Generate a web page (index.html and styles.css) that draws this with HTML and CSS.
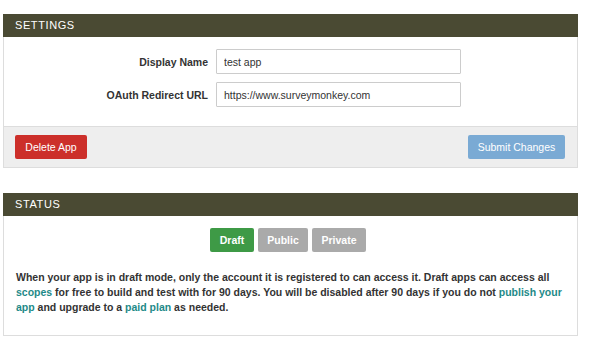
FILE: index.html
```html
<!DOCTYPE html>
<html>
<head>
<meta charset="utf-8">
<link rel="stylesheet" href="styles.css">
</head>
<body>
<div class="page">
  <section class="panel settings">
    <div class="panel-head">SETTINGS</div>
    <div class="panel-body form">
      <label class="label" for="dn">Display Name</label>
      <input class="field" id="dn" type="text" value="test app">
      <label class="label" for="ru">OAuth Redirect URL</label>
      <input class="field" id="ru" type="text" value="https://www.surveymonkey.com">
    </div>
    <div class="panel-foot">
      <button class="btn btn-danger">Delete App</button>
      <button class="btn btn-primary">Submit Changes</button>
    </div>
  </section>

  <section class="panel status">
    <div class="panel-head">STATUS</div>
    <div class="panel-body status-body">
      <div class="toggle">
        <button class="btn btn-green">Draft</button>
        <button class="btn btn-grey">Public</button>
        <button class="btn btn-grey">Private</button>
      </div>
      <p class="note">When your app is in draft mode, only the account it is registered to can access it. Draft apps can access all <a href="#">scopes</a> for free to build and test with for 90 days. You will be disabled after 90 days if you do not <a href="#">publish your</a> <a href="#">app</a> and upgrade to a <a href="#">paid plan</a> as needed.</p>
    </div>
  </section>
</div>
</body>
</html>
```

FILE: styles.css
```css
* { box-sizing: border-box; }
html, body { margin: 0; padding: 0; background: #fff; }
body {
  font-family: "Liberation Sans", Arial, Helvetica, sans-serif;
  color: #333;
  font-size: 10.5px;
}
.page {
  width: 575px;
  margin-left: 3px;
  padding-top: 14px;
}
.panel { display: flex; flex-direction: column; }
.settings { margin-bottom: 25px; }
.panel-head {
  height: 23px;
  background: #4a4a33;
  color: #fff;
  font-size: 11px;
  letter-spacing: 0.6px;
  line-height: 23px;
  padding-left: 12px;
}
.panel-body {
  border: 1px solid #ddd;
  border-top: none;
  background: #fff;
}
.form {
  display: grid;
  grid-template-columns: 204px 245px;
  column-gap: 8px;
  row-gap: 8px;
  align-items: center;
  padding: 12px 0 19px 0;
}
.label {
  text-align: right;
  font-weight: bold;
  font-size: 10.5px;
  color: #333;
}
.field {
  height: 25px;
  width: 245px;
  border: 1px solid #ccc;
  border-radius: 1px;
  padding: 0 7px;
  font-family: inherit;
  font-size: 10.5px;
  color: #333;
  outline: none;
}
.panel-foot {
  display: flex;
  justify-content: space-between;
  align-items: center;
  background: #eee;
  border: 1px solid #ddd;
  border-top: none;
  padding: 7px 12px 8px 11px;
  height: 41px;
}
.btn {
  height: 24px;
  border: none;
  border-radius: 2px;
  font-family: inherit;
  font-size: 10.5px;
  color: #fff;
  padding: 0 10px;
  cursor: pointer;
}
.btn-danger { background: #cc2f2a; width: 72px; }
.btn-primary { background: #7aaad4; width: 97px; padding: 0; }
.status-body {
  display: flex;
  flex-direction: column;
  padding: 12px 12px 20px 12px;
}
.toggle {
  display: flex;
  justify-content: center;
  gap: 4px;
  padding-right: 5px;
}
.btn-green { background: #3e9a46; font-weight: bold; width: 44px; padding: 0; }
.btn-grey { background: #aaa; font-weight: bold; padding: 0; }
.btn-grey:nth-child(2) { width: 50px; }
.btn-grey:nth-child(3) { width: 54px; }
.note {
  margin: 18px 0 0 0;
  font-weight: bold;
  font-size: 10.5px;
  line-height: 15px;
  color: #333;
}
.note a { color: #1e8a88; text-decoration: none; }
```
